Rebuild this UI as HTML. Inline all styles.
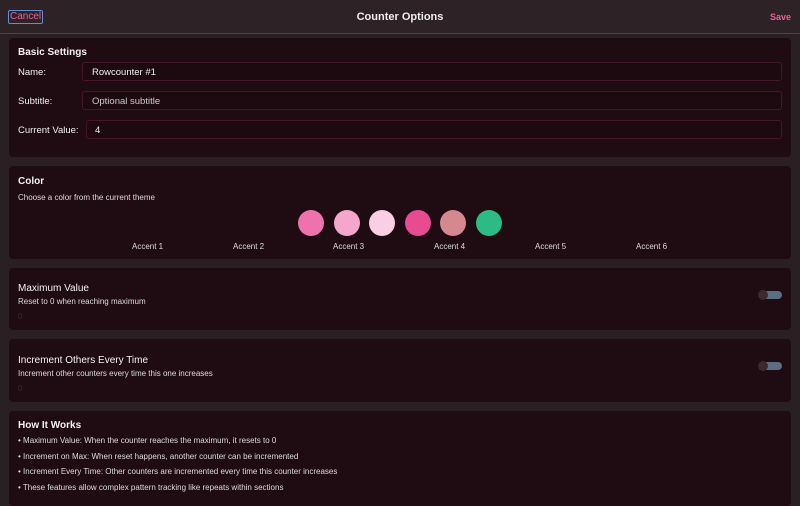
<!DOCTYPE html><html><head><style>
body{margin:0;width:800px;height:500px;overflow:hidden;background:#2a1f23;font-family:"Liberation Sans",sans-serif;color:#eee;position:relative}
.hdr{position:absolute;left:0;top:0;width:800px;height:33px;background:#2d2225;border-bottom:1px solid #4a4448}
.card{position:absolute;left:9px;width:782px;background:#1f0b12;border-radius:4px}
.a{position:absolute;white-space:nowrap}
.t{font-size:10px;font-weight:bold;color:#f2f2f2}
.s{font-size:8px;color:#ddd}
.inp{position:absolute;height:19px;border:1px solid #47162d;border-radius:3px;background:#1c0a10;font-size:9.5px;color:#eee;line-height:19px;box-sizing:border-box}
.c{position:absolute;width:26px;height:26px;border-radius:50%;top:210px}
.tg{position:absolute;right:18px;width:22px;height:8px;border-radius:4px;background:#5a6e84}
.tg::before{content:"";position:absolute;left:-2px;top:-1px;width:10px;height:10px;border-radius:50%;background:#3a2a2e}
</style></head><body>
<div class="hdr"></div>
<div class="a" style="left:8px;top:10px;font-size:10px;color:#e8629e;border:1px solid #5d8fd6;border-radius:2px;padding:0 1px;line-height:12px">Cancel</div>
<div class="a" style="left:0;width:800px;text-align:center;top:11px;font-size:11px;font-weight:bold">Counter Options</div>
<div class="a" style="left:770px;top:12px;font-size:9px;font-weight:bold;color:#e8629e">Save</div>

<div class="card" style="top:38px;height:119px"></div>
<div class="a t" style="left:18px;top:47px">Basic Settings</div>
<div class="a t" style="left:18px;top:67px;font-weight:normal;font-size:9.5px">Name:</div>
<div class="inp" style="left:82px;top:62px;width:700px;padding-left:9px">Rowcounter #1</div>
<div class="a t" style="left:18px;top:96px;font-weight:normal;font-size:9.5px">Subtitle:</div>
<div class="inp" style="left:82px;top:91px;width:700px;padding-left:9px;color:#ccc">Optional subtitle</div>
<div class="a t" style="left:18px;top:125px;font-weight:normal;font-size:9.5px">Current Value:</div>
<div class="inp" style="left:86px;top:120px;width:696px;padding-left:8px">4</div>

<div class="card" style="top:166px;height:93px"></div>
<div class="a t" style="left:18px;top:176px">Color</div>
<div class="a s" style="left:18px;top:193px">Choose a color from the current theme</div>
<div class="c" style="left:298px;background:#ee72ad"></div>
<div class="c" style="left:334px;background:#f4a6cc"></div>
<div class="c" style="left:369px;background:#fbcfe3"></div>
<div class="c" style="left:405px;background:#e84c90"></div>
<div class="c" style="left:440px;background:#d68890"></div>
<div class="c" style="left:476px;background:#2dbb85"></div>
<div class="a s" style="left:132px;top:242px">Accent 1</div>
<div class="a s" style="left:233px;top:242px">Accent 2</div>
<div class="a s" style="left:333px;top:242px">Accent 3</div>
<div class="a s" style="left:434px;top:242px">Accent 4</div>
<div class="a s" style="left:535px;top:242px">Accent 5</div>
<div class="a s" style="left:636px;top:242px">Accent 6</div>

<div class="card" style="top:268px;height:62px"></div>
<div class="a t" style="left:18px;top:283px;font-weight:normal">Maximum Value</div>
<div class="a s" style="left:18px;top:297px">Reset to 0 when reaching maximum</div>
<div class="a s" style="left:18px;top:312px;color:#3a2a2e">0</div>
<div class="tg" style="top:291px"></div>

<div class="card" style="top:339px;height:63px"></div>
<div class="a t" style="left:18px;top:355px;font-weight:normal">Increment Others Every Time</div>
<div class="a s" style="left:18px;top:369px">Increment other counters every time this one increases</div>
<div class="a s" style="left:18px;top:384px;color:#3a2a2e">0</div>
<div class="tg" style="top:362px"></div>

<div class="card" style="top:411px;height:95px"></div>
<div class="a t" style="left:18px;top:420px">How It Works</div>
<div class="a s" style="left:18px;top:436px">• Maximum Value: When the counter reaches the maximum, it resets to 0</div>
<div class="a s" style="left:18px;top:452px">• Increment on Max: When reset happens, another counter can be incremented</div>
<div class="a s" style="left:18px;top:467px">• Increment Every Time: Other counters are incremented every time this counter increases</div>
<div class="a s" style="left:18px;top:483px">• These features allow complex pattern tracking like repeats within sections</div>
</body></html>
